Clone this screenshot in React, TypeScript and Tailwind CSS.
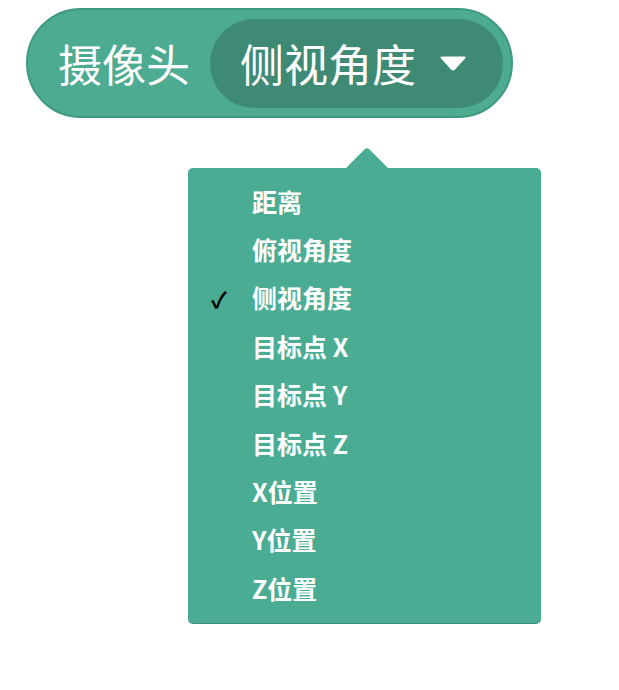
import React from 'react';

const options = ['距离', '俯视角度', '侧视角度', '目标点 X', '目标点 Y', '目标点 Z', 'X位置', 'Y位置', 'Z位置'];
const selected = '侧视角度';

const App: React.FC = () => {
  return (
    <div className="w-[619px] h-[690px] bg-white relative" style={{ fontFamily: '"Noto Sans CJK SC", "Noto Sans", sans-serif' }}>
      {/* block */}
      <div className="absolute left-[26px] top-[8px] h-[110px] w-[487px] flex items-center rounded-full bg-[#4cab91] border-2 border-[#3f9a80] pl-[30px] pr-[8px]">
        <span className="text-[44px] text-white leading-none">摄像头</span>
        <div className="ml-[20px] h-[89px] flex-1 flex items-center rounded-full bg-[#3f8a74] pl-[30px] pr-[36px]">
          <span className="text-[44px] text-white leading-none">{selected}</span>
          <svg className="ml-auto" width="28" height="17" viewBox="0 0 28 17">
            <path d="M3 1.5 H25 Q27.5 1.5 26 3.5 L16 14.5 Q14 16.5 12 14.5 L2 3.5 Q0.5 1.5 3 1.5 Z" fill="#ffffff" />
          </svg>
        </div>
      </div>

      {/* dropdown */}
      <div className="absolute left-[188px] top-[168px] w-[353px] h-[455px] rounded-[5px] bg-[#4aad93] shadow-[0_1px_0_#3d8f79] pt-[9px] pb-[14px]">
        <div className="absolute left-[162px] -top-[14px] w-[34px] h-[34px] rotate-45 rounded-[4px] bg-[#4aad93]" />
        <ul className="relative">
          {options.map((opt) => (
            <li key={opt} className="h-[48.4px] flex items-center text-white font-bold text-[25px] leading-none">
              <span className="w-[64px] pl-[23px] text-black text-[22px] font-bold">{opt === selected ? '✓' : ''}</span>
              <span>{opt}</span>
            </li>
          ))}
        </ul>
      </div>
    </div>
  );
};

export default App;
